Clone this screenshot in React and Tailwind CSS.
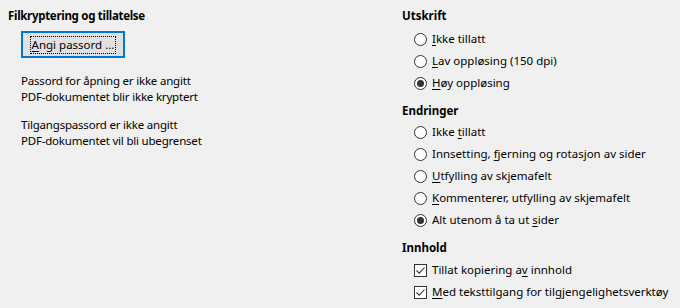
const font = { fontFamily: '"Noto Sans", "Open Sans", sans-serif' };

const Radio = ({ checked }) => (
  <span className="w-[13px] h-[13px] rounded-full border border-[#333] bg-white flex items-center justify-center shrink-0">
    {checked && <span className="w-[7px] h-[7px] rounded-full bg-[#333]" />}
  </span>
);

const Check = () => (
  <span className="w-[13px] h-[13px] border border-[#333] bg-white flex items-center justify-center shrink-0">
    <svg width="11" height="11" viewBox="0 0 11 11" fill="none">
      <path d="M1.5 5.5 L4.2 8.2 L9.5 2.5" stroke="#333" strokeWidth="1.1" />
    </svg>
  </span>
);

const Row = ({ children, control }) => (
  <div className="h-[22px] flex items-center pl-[12px] gap-[5px]">
    {control}
    <span>{children}</span>
  </div>
);

const U = ({ children }) => <span className="underline underline-offset-2">{children}</span>;

export default function App() {
  return (
    <div
      className="w-[680px] h-[308px] bg-[#f0f0f0] text-black text-[11.5px] leading-[16px] flex"
      style={font}
    >
      <div className="w-[402px] pl-[8px] pt-[8px] flex flex-col">
        <div className="font-bold tracking-[-0.3px]">Filkryptering og tillatelse</div>
        <div className="pl-[13px] mt-[7px]">
          <button className="w-[104px] h-[27px] border-2 border-[#0078d7] bg-[#e1e1e1] flex items-center justify-center">
            <span className="outline outline-1 outline-dotted outline-black px-[1px] leading-[16px]">
              <U>A</U>ngi passord ...
            </span>
          </button>
        </div>
        <div className="pl-[13px] mt-[15px] tracking-[-0.2px]">
          <div>Passord for åpning er ikke angitt</div>
          <div>PDF-dokumentet blir ikke kryptert</div>
        </div>
        <div className="pl-[13px] mt-[12px] tracking-[-0.2px]">
          <div>Tilgangspassord er ikke angitt</div>
          <div>PDF-dokumentet vil bli ubegrenset</div>
        </div>
      </div>

      <div className="flex-1 pt-[8px] flex flex-col">
        <div className="font-bold">Utskrift</div>
        <div className="mt-[4px]">
          <Row control={<Radio />}><U>I</U>kke tillatt</Row>
          <Row control={<Radio />}><U>L</U>av oppløsing (150 dpi)</Row>
          <Row control={<Radio checked />}><U>H</U>øy oppløsing</Row>
        </div>

        <div className="font-bold mt-[9px]">Endringer</div>
        <div className="mt-[2px]">
          <Row control={<Radio />}>Ikke <U>t</U>illatt</Row>
          <Row control={<Radio />}>Innsetting, <U>f</U>jerning og rotasjon av sider</Row>
          <Row control={<Radio />}><U>U</U>tfylling av skjemafelt</Row>
          <Row control={<Radio />}><U>K</U>ommenterer, utfylling av skjemafelt</Row>
          <Row control={<Radio checked />}>Alt utenom å ta ut <U>s</U>ider</Row>
        </div>

        <div className="font-bold mt-[9px]">Innhold</div>
        <div className="mt-[3px]">
          <Row control={<Check />}>Tillat kopiering a<U>v</U> innhold</Row>
          <Row control={<Check />}><U>M</U>ed teksttilgang for tilgjengelighetsverktøy</Row>
        </div>
      </div>
    </div>
  );
}
